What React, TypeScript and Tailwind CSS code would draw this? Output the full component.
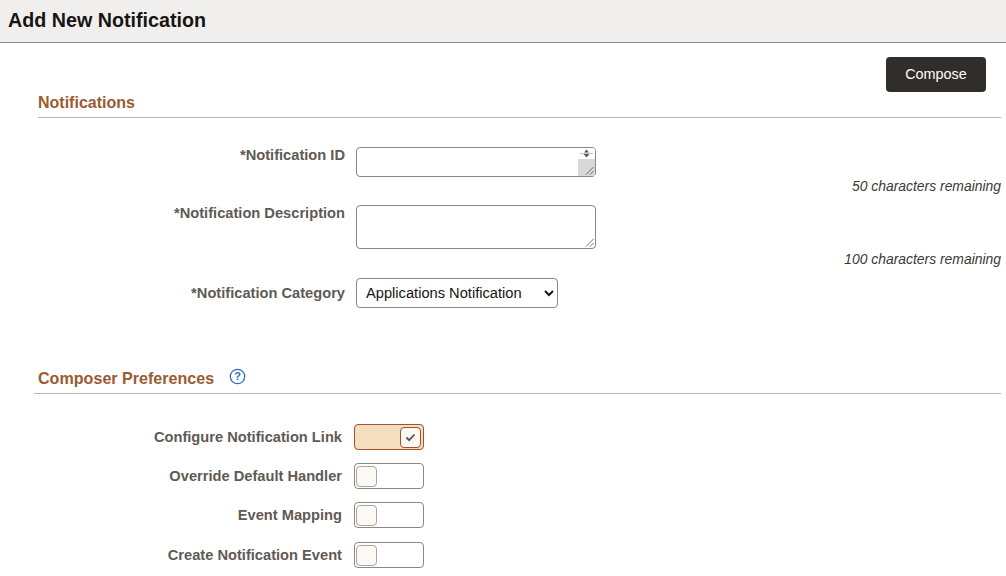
const FONT = "font-['Liberation_Sans',Arial,sans-serif]";

function Toggle({ on }: { on?: boolean }) {
  return (
    <div
      className={`flex h-[26px] w-[70px] shrink-0 items-center rounded-[4px] border pl-[1px] pr-[2px] ${
        on ? "justify-end border-[#a5502a] bg-[#f3dfc0]" : "justify-start border-[#8a8784] bg-white"
      }`}
    >
      <div
        className={`flex h-[21px] w-[21px] items-center justify-center rounded-[4px] border bg-[#fcf8f4] ${
          on ? "border-[#a5502a]" : "border-[#a8a4a0]"
        }`}
      >
        {on && (
          <svg width="11" height="9" viewBox="0 0 11 9" fill="none">
            <path d="M1.5 4.5 L4.2 7.2 L9.5 1.5" stroke="#55514d" strokeWidth="1.8" />
          </svg>
        )}
      </div>
    </div>
  );
}

function ToggleRow({ label, on, className }: { label: string; on?: boolean; className?: string }) {
  return (
    <div className={`flex items-center ${className ?? ""}`}>
      <div className="w-[342px] text-right text-[14.67px] font-bold text-[#5f5a55]">{label}</div>
      <div className="ml-[12px]">
        <Toggle on={on} />
      </div>
    </div>
  );
}

function FieldLabel({ text }: { text: string }) {
  return <div className="w-[345px] shrink-0 text-right text-[14.67px] font-bold leading-[16px] text-[#5f5a55]">*{text}</div>;
}

function Remaining({ text }: { text: string }) {
  return <div className="pr-[5px] text-right text-[13.9px] italic leading-[16px] text-[#3d3935]">{text}</div>;
}

export default function App() {
  return (
    <div className={`h-[576px] w-[1006px] overflow-hidden bg-white ${FONT}`}>
      {/* Header */}
      <div className="flex h-[43px] items-center border-b border-[#8a8784] bg-[#f1efed] pl-[8px]">
        <h1 className="text-[19.7px] font-bold text-[#161513]">Add New Notification</h1>
      </div>

      <div className="flex justify-end pr-[20px] pt-[14px]">
        <button className="h-[35px] w-[100px] rounded-[4px] bg-[#312d2a] text-[14.4px] text-white">Compose</button>
      </div>

      {/* Notifications */}
      <div className="ml-[38px] mr-[5px] h-[26px] border-b border-[#b8b5b2] pt-[1px]">
        <h2 className="text-[16px] font-bold leading-[20px] text-[#9a5b32]">Notifications</h2>
      </div>

      <div className="mt-[29px] flex">
        <FieldLabel text="Notification ID" />
        <div className="relative ml-[11px] h-[30px] w-[240px]">
          <textarea className="block h-full w-full resize-none rounded-[4px] border border-[#8a8784] bg-white" />
          <div className="absolute right-[1px] top-[1px] flex h-[28px] w-[17px] flex-col overflow-hidden rounded-tr-[3px]">
            <div className="relative flex h-[11px] items-center justify-center bg-white">
              <div className="absolute left-[2px] right-[2px] top-[5px] h-px bg-[#c8c8c8]" />
              <svg className="relative" width="9" height="9" viewBox="0 0 9 9">
                <path d="M4.5 0.5 L7 3.5 L2 3.5 Z M1.5 5 L7.5 5 L4.5 8.5 Z" fill="#5f5a55" />
              </svg>
            </div>
            <div className="relative flex-1 bg-[#d8d8d8]">
              <svg className="absolute bottom-[1px] right-[1px]" width="9" height="9" viewBox="0 0 9 9">
                <path d="M1 8.5 L8.5 1 M5 8.5 L8.5 5" stroke="#55514d" strokeWidth="0.8" />
              </svg>
            </div>
          </div>
        </div>
      </div>
      <div className="mt-[1px]">
        <Remaining text="50 characters remaining" />
      </div>

      <div className="mt-[11px] flex">
        <FieldLabel text="Notification Description" />
        <div className="relative ml-[11px] h-[44px] w-[240px]">
          <textarea className="block h-full w-full resize-none rounded-[4px] border border-[#8a8784] bg-white" />
          <svg className="absolute bottom-[2px] right-[2px]" width="9" height="9" viewBox="0 0 9 9">
            <path d="M1 8.5 L8.5 1 M5 8.5 L8.5 5" stroke="#55514d" strokeWidth="0.8" />
          </svg>
        </div>
      </div>
      <div className="mt-[2px]">
        <Remaining text="100 characters remaining" />
      </div>

      <div className="mt-[11px] flex items-center">
        <FieldLabel text="Notification Category" />
        <select
          defaultValue="Applications Notification"
          className="ml-[11px] h-[30px] w-[202px] rounded-[4px] border border-[#8a8784] bg-white pl-[5px] text-[14.67px] text-[#161513]"
        >
          <option>Applications Notification</option>
        </select>
      </div>

      {/* Composer Preferences */}
      <div className="ml-[34px] mr-[5px] mt-[59px] flex h-[27px] items-start border-b border-[#b8b5b2] pl-[4px]">
        <h2 className="pt-[1px] text-[16.1px] font-bold leading-[20px] text-[#9a5b32]">Composer Preferences</h2>
        <svg className="ml-[15px] mt-[1px]" width="17" height="17" viewBox="0 0 17 17" fill="none">
          <circle cx="8.5" cy="8.5" r="7.2" stroke="#2f6fb5" strokeWidth="1.3" />
          <text x="8.5" y="12.4" textAnchor="middle" fontSize="11" fontWeight="700" fill="#2f6fb5" fontFamily="Liberation Sans, sans-serif">?</text>
        </svg>
      </div>

      <ToggleRow label="Configure Notification Link" on className="mt-[30px]" />
      <ToggleRow label="Override Default Handler" className="mt-[13px]" />
      <ToggleRow label="Event Mapping" className="mt-[13px]" />
      <ToggleRow label="Create Notification Event" className="mt-[14px]" />
    </div>
  );
}
